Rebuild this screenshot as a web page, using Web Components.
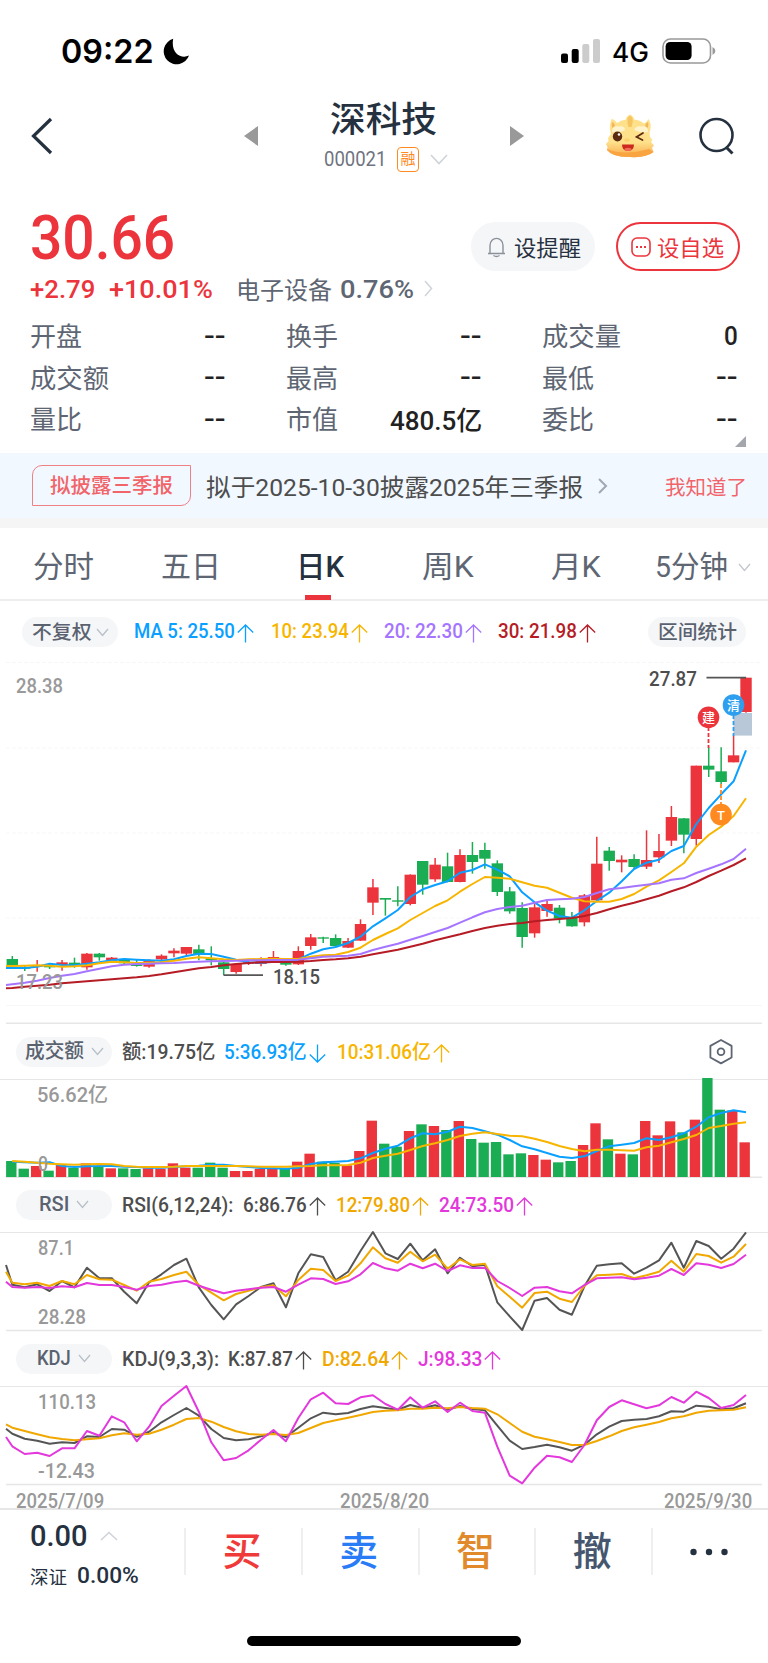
<!DOCTYPE html>
<html lang="zh-CN">
<head>
<meta charset="UTF-8">
<title>深科技 000021</title>
<style>
  body {
    margin: 0;
    background: #fff;
    color: #25313f;
    font-family: Roboto, "Noto Sans CJK SC", sans-serif;
  }
</style>
</head>
<body>
<status-bar></status-bar>
<stock-header></stock-header>
<quote-summary></quote-summary>
<quote-grid></quote-grid>
<notice-bar></notice-bar>
<period-tabs></period-tabs>

<indicator-row class="ma">
  <pill-button slot="pill" w="96" arrow><fit-text w="60">不复权</fit-text></pill-button>
  <trend-value w="101" color="#0aa0ff" style="margin-left:16px">MA 5: 25.50</trend-value>
  <trend-value w="78" color="#f7b500" style="margin-left:17px">10: 23.94</trend-value>
  <trend-value w="79" color="#a675ff" style="margin-left:16px">20: 22.30</trend-value>
  <trend-value w="79" color="#b51c25" style="margin-left:16px">30: 21.98</trend-value>
  <pill-button slot="end" w="98"><fit-text w="79">区间统计</fit-text></pill-button>
</indicator-row>
<candle-chart></candle-chart>

<indicator-row>
  <pill-button slot="pill" w="96" arrow><fit-text w="59">成交额</fit-text></pill-button>
  <fit-text w="93" style="margin-left:10px">额:19.75亿</fit-text>
  <trend-value w="83" color="#0aa0ff" dir="down" style="margin-left:9px">5:36.93亿</trend-value>
  <trend-value w="94" color="#f7b500" style="margin-left:11px">10:31.06亿</trend-value>
  <svg slot="end" width="26" height="28" viewBox="0 0 26 28" fill="none" stroke="#5e6673" stroke-width="1.8" style="margin-right:12px">
    <path d="M13 2 L23.600 7.900 V19.500 L13 25.400 L2.400 19.500 V7.900 Z" stroke-linejoin="round"/>
    <circle cx="13" cy="13.700" r="3.400"/>
  </svg>
</indicator-row>
<volume-chart></volume-chart>

<indicator-row>
  <pill-button slot="pill" w="96" arrow><fit-text w="30">RSI</fit-text></pill-button>
  <fit-text w="111" style="margin-left:10px">RSI(6,12,24):</fit-text>
  <trend-value w="64" style="margin-left:10px">6:86.76</trend-value>
  <trend-value w="74" color="#f0a800" style="margin-left:10px">12:79.80</trend-value>
  <trend-value w="75" color="#e338dc" style="margin-left:10px">24:73.50</trend-value>
</indicator-row>
<line-chart name="rsi" top="87.1" topw="36" bottom="28.28" bottomw="48"></line-chart>

<indicator-row>
  <pill-button slot="pill" w="96" arrow><fit-text w="34">KDJ</fit-text></pill-button>
  <fit-text w="97" style="margin-left:10px">KDJ(9,3,3):</fit-text>
  <trend-value w="65" style="margin-left:9px">K:87.87</trend-value>
  <trend-value w="67" color="#f0a800" style="margin-left:10px">D:82.64</trend-value>
  <trend-value w="64" color="#e338dc" style="margin-left:10px">J:98.33</trend-value>
</indicator-row>
<line-chart name="kdj" top="110.13" topw="58" bottom="-12.43" bottomw="57"></line-chart>

<date-axis></date-axis>
<trade-bar></trade-bar>

<script>
const RED = '#ec343c';
const GREEN = '#1aad53';

// small helper: every component only supplies its markup
class Base extends HTMLElement {
  connectedCallback() {
    this.attachShadow({ mode: 'open' });
    this.shadowRoot.innerHTML = this.render();
  }
}

// One line of text squeezed or stretched to a set width (w)
class FitText extends HTMLElement {
  connectedCallback() {
    const w = Number(this.getAttribute('w'));
    this.attachShadow({ mode: 'open' });
    this.shadowRoot.innerHTML = `
      <style>
        :host { display: block; flex: none; width: ${w}px; white-space: nowrap; }
        span { display: inline-block; transform-origin: 0 50%; }
      </style>
      <span><slot></slot></span>
    `;
    const span = this.shadowRoot.querySelector('span');
    const natural = span.offsetWidth;
    if (natural) span.style.transform = `scaleX(${w / natural})`;
  }
}

// Figure followed by a thin up or down arrow
class TrendValue extends Base {
  render() {
    const down = this.getAttribute('dir') === 'down';
    return `
      <style>
        :host { display: flex; flex: none; align-items: center; gap: 2px; color: ${this.getAttribute('color') || 'inherit'}; }
        svg { margin-top: 3px; ${down ? 'transform: rotate(180deg);' : ''} }
      </style>
      <fit-text w="${this.getAttribute('w')}"><slot></slot></fit-text>
      <svg width="17" height="19" viewBox="0 0 17 19" fill="none" stroke="currentColor" stroke-width="1.300"><path d="M8.500 1 V18.500 M.800 8.500 L8.500 1 L16.200 8.500"/></svg>
    `;
  }
}
customElements.define('trend-value', TrendValue);

class StatusBar extends Base {
  render() {
    return `
      <style>
        :host { display: flex; align-items: center; height: 102px; padding: 0 52px 0 61px; box-sizing: border-box; color: #000; font-family: Inter, sans-serif; }
        .time { font-size: 33px; font-weight: 600; line-height: 40px; }
        .net { font-size: 27px; font-weight: 500; margin: 2px 13px 0 12px; }
        .moon { margin-left: 9px; }
        .bars { margin-left: auto; }
      </style>
      <fit-text class="time" w="93">09:22</fit-text>
      <svg class="moon" width="27" height="27" viewBox="0 0 27 27"><path d="M10.2 .8 A13 13 0 1 0 26 17.6 C17.5 21.5 7.500 14.5 10.200 .8 Z"/></svg>
      <svg class="bars" width="40" height="26" viewBox="0 0 40 26">
        <rect x="1" y="15.500" width="7" height="9.500" rx="2"/>
        <rect x="11.700" y="11" width="7" height="14" rx="2"/>
        <rect x="22.300" y="6" width="7" height="19" rx="2" fill="#ccc"/>
        <rect x="33" y="1" width="7" height="24" rx="2" fill="#ccc"/>
      </svg>
      <fit-text class="net" w="37">4G</fit-text>
      <svg width="54" height="26" viewBox="0 0 54 26">
        <rect x="1" y="1" width="47.500" height="24" rx="7.500" fill="none" stroke="#999" stroke-width="1.600"/>
        <rect x="3.600" y="4" width="26" height="18" rx="4.500"/>
        <path d="M50.500 9 Q53.400 10.500 53.400 13 Q53.400 15.500 50.500 17 Z" fill="#999"/>
      </svg>
    `;
  }
}
customElements.define('status-bar', StatusBar);

class StockHeader extends Base {
  render() {
    return `
      <style>
        :host { display: flex; align-items: center; height: 68px; padding-left: 30px; box-sizing: border-box; }
        svg { flex: none; display: block; }
        .title { width: 228px; margin: 6px 12px 0 12px; height: 78px; display: flex; flex-direction: column; align-items: center; }
        h1 { margin: 0 2px 0 0; font-size: 35px; font-weight: 500; line-height: 41px; }
        .code { display: flex; align-items: center; height: 36px; margin-left: 4px; color: #6f7480; font-size: 20px; }
        .tag { width: 20px; height: 23px; margin: 0 11px; border: 1.5px solid #ff8a1f; border-radius: 4px; color: #ff8a1f; font-size: 15px; line-height: 22px; text-align: center; }
      </style>
      <svg width="24" height="40" viewBox="0 0 24 40" fill="none" stroke="#25313f" stroke-width="3.200"><path d="M21 3 L3.500 20 L21 37"/></svg>
      <svg width="14" height="20" viewBox="0 0 14 20" fill="#999" style="margin-left:190px"><path d="M14 0 V20 L0 10 Z"/></svg>
      <div class="title">
        <h1><fit-text w="107">深科技</fit-text></h1>
        <div class="code">
          <fit-text w="62">000021</fit-text>
          <span class="tag">融</span>
          <svg width="18" height="11" viewBox="0 0 18 11" fill="none" stroke="#d0d3d8" stroke-width="1.600"><path d="M1 1 L9 9.500 L17 1"/></svg>
        </div>
      </div>
      <svg width="14" height="20" viewBox="0 0 14 20" fill="#999"><path d="M0 0 V20 L14 10 Z"/></svg>
      <svg width="50" height="44" viewBox="0 0 50 44" style="margin-left:81px">
        <defs>
          <linearGradient id="g" x1="0" y1="0" x2="0" y2="1">
            <stop offset="0" stop-color="#ffe08a"/><stop offset=".65" stop-color="#ffe18c"/><stop offset="1" stop-color="#f8a848"/>
          </linearGradient>
        </defs>
        <path d="M6.500 5 Q9 5 12 9 Q16 6 21 5.500 Q21 2.500 25 .5 Q29 2.500 29 5.500 Q35 6 39 9.500 Q42 8 43.500 5 Q47.500 11 44.500 18 L45 23 L47.500 26 L46 28 L49 31.500 L47 34 L48.500 38 Q41 44 25 43 Q8 43.500 2 36 L2.500 33 L1 30 L3.500 27 L3 24 L6 20 Q3.500 13 6.500 5 Z" fill="url(#g)"/>
        <path d="M2 35 Q18 42 44 35 L48.500 38 Q41 44 25 43 Q8 43.500 2 36 Z" fill="#f8a440"/>
        <path d="M7 8 Q9.500 9 10 12 L7.500 14 Q6 11 7 8 Z M43 8 Q40.500 9 40 12 L42.500 14 Q44 11 43 8 Z" fill="#f3b45a"/>
        <path d="M22.500 4 Q25 0 27.500 4 Q28.500 8 26.500 13 H23.500 Q22 9 22.500 4 Z" fill="#f5c562"/>
        <path d="M7 18 Q7 11 14 12.500 Q20 11.500 20 16 Q15 19 7 18 Z" fill="#fff3cd"/>
        <path d="M29 16 Q31 11.500 36 12.500 Q43 11 43 18 Q35 19 29 16 Z" fill="#fff3cd"/>
        <ellipse cx="12.500" cy="22.500" rx="4.700" ry="5" fill="#5c2b12"/>
        <circle cx="14" cy="20.500" r="1.300" fill="#fff"/>
        <ellipse cx="22" cy="26" rx="3" ry="1.800" fill="#ffd071"/>
        <path d="M38 19 L31.500 23 L37.500 26" fill="none" stroke="#5c2b12" stroke-width="1.700" stroke-linecap="round"/>
        <path d="M17 30.500 H29 Q29 37 23 37 Q17 37 17 30.500 Z" fill="#cb291f"/>
        <ellipse cx="23" cy="35.300" rx="3.500" ry="1.600" fill="#f46a52"/>
      </svg>
      <svg width="38" height="40" viewBox="0 0 38 40" fill="none" stroke="#25313f" stroke-width="2.600" style="margin-left:43px"><circle cx="18.500" cy="19" r="16"/><path d="M28 31 L34.500 37.500" stroke-width="3"/></svg>
    `;
  }
}
customElements.define('stock-header', StockHeader);

class QuoteSummary extends Base {
  render() {
    return `
      <style>
        :host { display: flex; height: 144px; padding: 38px 28px 0 30px; box-sizing: border-box; }
        .price { color: ${RED}; font-size: 62px; font-weight: 500; line-height: 60px; }
        .sub { display: flex; align-items: center; height: 40px; font-size: 26.5px; color: #5e6673; }
        .up { color: ${RED}; font-weight: 500; }
        .btn { display: flex; align-items: center; box-sizing: border-box; width: 124px; height: 49px; margin-top: 14px; padding-bottom: 2px; border-radius: 25px; background: #f5f6f8; font-size: 22px; }
        .add { margin-left: 21px; background: #fff; border: 2px solid ${RED}; color: ${RED}; }
        svg { flex: none; }
      </style>
      <div>
        <fit-text class="price" w="145">30.66</fit-text>
        <div class="sub">
          <fit-text class="up" w="65">+2.79</fit-text>
          <fit-text class="up" w="104" style="margin-left:14px">+10.01%</fit-text>
          <fit-text w="96" style="margin-left:23px;font-size:24px">电子设备</fit-text>
          <fit-text w="74" style="margin-left:8px;font-weight:500">0.76%</fit-text>
          <svg width="9" height="17" viewBox="0 0 9 17" fill="none" stroke="#d0d3d8" stroke-width="1.500" style="margin-left:10px"><path d="M1 1 L7.500 8.500 L1 16"/></svg>
        </div>
      </div>
      <div class="btn" style="margin-left:auto">
        <svg width="19" height="21" viewBox="0 0 19 21" fill="none" stroke="#8b919b" stroke-width="1.400" style="margin:4px 8px 0 16px"><path d="M1 16.500 H18 M3 16 V8.500 C3 -1 16 -1 16 8.500 V16 M6.500 18.500 Q9.500 20.500 12.500 18.500"/></svg>
        <fit-text w="67">设提醒</fit-text>
      </div>
      <div class="btn add">
        <svg width="20" height="20" viewBox="0 0 20 20" fill="none" stroke="${RED}" stroke-width="1.600" style="margin:3px 6px 0 13px"><rect x="1" y="1" width="18" height="18" rx="5"/><path d="M5 10 h2 m2 0 h2 m2 0 h2" stroke-width="2"/></svg>
        <fit-text w="67">设自选</fit-text>
      </div>
    `;
  }
}
customElements.define('quote-summary', QuoteSummary);

class QuoteGrid extends Base {
  render() {
    const items = [
      ['开盘', '--', 22, 52], ['换手', '--', 22, 52], ['成交量', '0', 14, 79],
      ['成交额', '--', 22, 79], ['最高', '--', 22, 52], ['最低', '--', 22, 52],
      ['量比', '--', 22, 52], ['市值', '480.5亿', 92, 52], ['委比', '--', 22, 52]
    ];
    return `
      <style>
        :host { display: block; height: 139px; position: relative; }
        .grid { display: grid; grid-template-columns: 196px 196px 196px; column-gap: 60px; grid-auto-rows: 41.5px; padding-left: 30px; }
        .item { display: flex; align-items: center; justify-content: space-between; font-size: 26px; color: #5e6673; }
        .item b { font-weight: 500; color: #222; margin-top: 2px; }
        svg { position: absolute; right: 22px; bottom: 6px; }
      </style>
      <div class="grid">
        ${items.map(i => `<div class="item"><fit-text w="${i[3]}">${i[0]}</fit-text><b><fit-text w="${i[2]}">${i[1]}</fit-text></b></div>`).join('')}
      </div>
      <svg width="11" height="11" viewBox="0 0 11 11"><path d="M11 0 V11 H0 Z" fill="#a3a6ab"/></svg>
    `;
  }
}
customElements.define('quote-grid', QuoteGrid);

class NoticeBar extends Base {
  render() {
    return `
      <style>
        :host { display: flex; align-items: center; height: 75px; box-sizing: border-box; padding: 0 21px 0 32px; background: #f1f8ff; border-bottom: 10px solid #f5f5f5; }
        .tag { box-sizing: border-box; width: 159px; height: 41px; border: 1.5px solid #f08086; border-radius: 10px 0 10px 0; color: #f1646a; font-size: 20.5px; line-height: 41px; padding-left: 17px; font-weight: 500; }
        .text { margin-left: 15px; color: #4d4d4d; font-size: 24px; }
        .ok { margin: 1px 0 0 auto; color: #f1646a; font-size: 20px; }
      </style>
      <div class="tag"><fit-text w="123">拟披露三季报</fit-text></div>
      <fit-text class="text" w="377">拟于2025-10-30披露2025年三季报</fit-text>
      <svg width="10" height="16" viewBox="0 0 10 16" fill="none" stroke="#a0a8b3" stroke-width="2" style="margin-left:15px"><path d="M1 1 L8 8 L1 15"/></svg>
      <fit-text class="ok" w="82">我知道了</fit-text>
    `;
  }
}
customElements.define('notice-bar', NoticeBar);

class PeriodTabs extends Base {
  render() {
    const tabs = [['分时', 61, 33], ['五日', 60, 67], ['日K', 48, 75], ['周K', 52, 78], ['月K', 50, 77], ['5分钟', 73, 54]];
    return `
      <style>
        :host { display: flex; height: 73px; box-sizing: border-box; border-bottom: 2px solid #eee; font-size: 30px; color: #5e6673; }
        .tab { display: flex; flex-direction: column; align-items: center; justify-content: space-between; line-height: 77px; height: 72px; }
        .tab fit-text { height: 67px; }
        .on { color: #25313f; font-weight: 500; }
        .on::after { content: ''; width: 26px; height: 5px; margin-right: 4px; background: ${RED}; }
        svg { margin: 35px 0 0 10px; }
      </style>
      ${tabs.map(t => `<div class="tab${t[0] === '日K' ? ' on' : ''}" style="margin-left:${t[2]}px"><fit-text w="${t[1]}">${t[0]}</fit-text></div>`).join('')}
      <svg width="13" height="9" viewBox="0 0 13 9" fill="none" stroke="#c3c7cd" stroke-width="1.300"><path d="M1 1 L6.500 7.500 L12 1"/></svg>
    `;
  }
}
customElements.define('period-tabs', PeriodTabs);

class PillButton extends Base {
  render() {
    const arrow = this.hasAttribute('arrow');
    return `
      <style>
        :host { display: flex; flex: none; align-items: center; justify-content: center; gap: var(--pill-gap, 7px); box-sizing: border-box; width: ${this.getAttribute('w')}px; height: 30px; border-radius: 15px; background: #f5f6f8; color: #5a6270; line-height: 31px; }
      </style>
      <slot></slot>
      ${arrow ? '<svg width="13" height="9" viewBox="0 0 13 9" fill="none" stroke="#b9bfc8" stroke-width="1.300"><path d="M1 1 L6.500 7.500 L12 1"/></svg>' : ''}
    `;
  }
}
customElements.define('pill-button', PillButton);

class IndicatorRow extends Base {
  render() {
    return `
      <style>
        :host { display: flex; align-items: center; box-sizing: border-box; height: 56px; padding: 0 22px 0 16px; border-bottom: 1.500px solid #e6e6e6; font-size: 20px; font-weight: 500; color: #4d4d4d; line-height: 30px; }
        :host(.ma) { height: 49px; padding: 13px 22px 0 22px; border: none; font-size: 19.5px; --pill-gap: 4px; }
        .end { margin-left: auto; display: flex; }
      </style>
      <slot name="pill"></slot>
      <slot></slot>
      <div class="end"><slot name="end"></slot></div>
    `;
  }
}
customElements.define('indicator-row', IndicatorRow);

// ---- charts ----
// Series are sampled at 3 units per pixel, one value per trading day.
const STEP = 12.436;
const dayX = i => 12.3 + i * STEP;

function line(values, color, top, start) {
  const pts = values.map((v, i) => `${dayX(i).toFixed(1)},${(top + v / 3).toFixed(1)}`);
  if (start) pts.unshift(`6,${(top + start / 3).toFixed(1)}`);
  return `<polyline points="${pts.join(' ')}" fill="none" stroke="${color}" stroke-width="2" stroke-linejoin="round"/>`;
}

function label(x, y, w, text, color = '#999') {
  return `<text x="${x}" y="${y}" textLength="${w}" lengthAdjust="spacingAndGlyphs" fill="${color}">${text}</text>`;
}

const CHART_CSS = `
  :host { display: block; }
  svg { display: block; overflow: visible; font-size: 20px; font-weight: 500; }
`;

// colour, high, body top, body bottom, low
const CANDLES = `g918,927,945,948 g948,951,956,963 r930,946,950,965 g940,948,952,957 r930,937,945,962 g923,938,945,953
r909,911,952,959 g909,911,922,932 r921,923,932,937 g926,930,940,943 g930,942,948,950 r928,930,950,953
r913,917,928,938 r895,902,910,922 r891,891,911,918 g884,898,915,931 g889,925,931,946 g930,937,957,975
r940,942,966,971 r930,937,941,945 r922,930,942,949 r903,921,930,935 g928,934,944,947 r889,903,943,945
r852,862,888,899 g860,862,866,879 g853,864,888,890 r864,873,893,894 r808,822,872,873 r687,712,758,795
g744,744,749,797 g709,751,755,769 r673,674,762,766 g633,633,704,734 r624,644,688,695 g608,649,696,697
r598,615,696,697 g576,615,636,671 g578,600,626,656 g631,640,726,738 g711,724,784,791 g757,774,861,893
r762,772,850,863 r752,762,783,800 g765,773,806,820 g786,804,829,830 r732,736,817,829 r560,641,751,752
g591,602,633,662 r616,629,637,667 g613,627,651,657 r541,630,650,657 r552,603,622,639 r468,501,572,588
g504,505,554,610 r347,347,567,587 g292,347,359,381 g292,364,396,402 r256,316,337,337 r83,83,186,188`.split(/\s+/);

const MA5 = [953,954,950,941,945,946,941,937,931,927,929,931,932,928,918,911,912,920,929,937,938,935,936,928,911,898,891,879,860,829,805,780,741,718,705,694,668,660,643,659,679,727,757,782,798,803,781,753,728,694,657,638,629,603,588,522,474,433,394,301];
const MA10 = [948,947,946,947,950,949,946,940,935,937,939,938,937,932,926,922,925,928,930,928,927,926,927,927,920,916,914,906,893,870,852,835,810,789,768,751,725,702,681,683,686,697,707,713,728,743,754,755,755,747,732,710,691,666,640,590,555,530,498,445];
const MA20 = [1003,998,992,984,977,972,964,956,949,944,942,941,940,939,937,935,934,933,932,931,931,930,930,929,925,920,919,917,912,900,890,881,869,858,846,834,818,802,787,777,771,767,758,750,748,746,741,729,718,714,709,704,700,689,685,669,656,643,627,596];
const MA30 = [1014,1010,1007,1004,1000,997,994,991,988,985,982,978,973,967,961,955,951,946,942,939,937,936,936,935,933,930,928,925,920,913,906,899,890,881,871,862,853,843,834,827,822,819,814,810,807,804,798,789,778,767,758,748,737,724,712,696,678,662,645,625];

class CandleChart extends Base {
  marker(x, y, color, text, from, to) {
    return `
      <path d="M${x} ${from} V${to}" stroke="${color}" stroke-width="1.8" stroke-dasharray="4 2"/>
      <circle cx="${x}" cy="${y}" r="10.8" fill="${color}"/>
      <text x="${x}" y="${y + 5}" font-size="13" text-anchor="middle" fill="#fff">${text}</text>`;
  }

  render() {
    const candles = CANDLES.map((c, i) => {
      const color = c[0] === 'r' ? RED : GREEN;
      const [high, top, bottom, low] = c.slice(1).split(',').map(v => 650 + v / 3);
      const x = dayX(i);
      return `<path d="M${x} ${high} V${low}" stroke="${color}" stroke-width="1.5"/><rect x="${x - 5.7}" y="${top}" width="11.4" height="${Math.max(bottom - top, 1.2)}" fill="${color}"/>`;
    }).join('');
    return `
      <style>${CHART_CSS}</style>
      <svg width="768" height="374" viewBox="0 650 768 374">
        <path d="M6 662.500 H762 M6 748 H762 M6 833 H762 M6 918 H762" stroke="#f7f7f7" stroke-width="1.2" stroke-dasharray="4 2"/>
        <path d="M6 1005.500 H762" stroke="#f7f7f7" stroke-width="1.2"/>
        <path d="M6 1023.300 H762" stroke="#e6e6e6" stroke-width="1.5"/>
        <rect x="733.500" y="713" width="18.500" height="22.600" fill="#b9c8d8"/>
        ${candles}
        ${line(MA5, '#0aa0ff', 650, 954)}
        ${line(MA10, '#f7b500', 650, 948)}
        ${line(MA20, '#a675ff', 650, 1005)}
        ${line(MA30, '#b51c25', 650, 1015)}
        <path d="M223.500 975.200 H263 M706.500 677.700 H746" stroke="#555" stroke-width="1.8"/>
        ${label(16, 692.6, 47, '28.38')}
        ${label(16, 989, 47, '17.23')}
        ${label(273, 984, 47, '18.15', '#4d4d4d')}
        ${label(649, 686, 48, '27.87', '#4d4d4d')}
        ${this.marker(708.5, 717.3, '#ec343c', '建', 727, 748)}
        ${this.marker(733.5, 705, '#2d9fee', '清', 715, 736)}
        ${this.marker(721, 814.6, '#ff8a1f', 'T', 784, 804)}
      </svg>
    `;
  }
}
customElements.define('candle-chart', CandleChart);

const VOLUMES = 'g423 g446 r438 g452 r435 g443 r430 g440 r445 g445 g447 r445 r446 r430 r443 g443 g428 g443 r453 r453 r447 r447 g447 r425 r401 g425 g429 r436 r393 r302 g371 g380 r333 g313 r318 g330 r303 g357 g368 g366 g403 g400 r405 r419 g427 g423 r375 r310 g358 r401 g403 r303 r346 r304 g337 r299 g174 g269 r272 r367'.split(' ');
const VOL5 = [425,427,428,427,438,441,439,438,438,440,441,443,443,441,439,437,434,434,438,441,444,445,446,443,432,427,425,423,415,399,386,377,355,340,343,335,320,324,334,344,360,379,388,399,410,414,409,393,379,374,369,355,360,352,340,320,292,279,271,277];
const VOL10 = [423,425,428,431,433,434,433,432,433,438,440,441,441,440,438,438,438,438,438,439,440,440,440,439,438,436,436,435,428,414,407,401,390,378,370,360,348,341,337,342,347,349,356,366,378,387,394,389,389,391,392,382,377,367,357,345,324,318,311,307];

class VolumeChart extends Base {
  render() {
    const bars = VOLUMES.map((v, i) => {
      const top = 1020 + v.slice(1) / 3;
      const x = Math.max(6, 11.3 + i * 12.43 - 5.2);
      return `<rect x="${x}" y="${top}" width="10.4" height="${1177 - top}" fill="${v[0] === 'r' ? RED : GREEN}"/>`;
    }).join('');
    return `
      <style>${CHART_CSS}</style>
      <svg width="768" height="97" viewBox="0 1080 768 97">
        <path d="M6 1177.200 H762" stroke="#e6e6e6" stroke-width="1.5"/>
        ${bars}
        ${line(VOL5, '#0aa0ff', 1020)}
        ${line(VOL10, '#f7b500', 1020)}
        ${label(37, 1102, 71, '56.62亿')}
        ${label(38, 1171, 10, '0')}
      </svg>
    `;
  }
}
customElements.define('volume-chart', VolumeChart);

const SERIES = {
  rsi: [
    { color: '#555', start: 120, v: [179,187,178,198,168,187,128,160,160,200,235,172,148,120,101,187,240,283,238,213,186,175,247,145,88,96,166,140,78,21,85,102,56,106,73,145,98,124,119,232,274,315,227,219,254,269,184,122,118,115,146,128,106,53,128,48,63,101,71,22] },
    { color: '#f0a800', start: 140, v: [173,178,173,183,168,178,150,163,164,180,197,170,162,150,140,180,203,226,207,197,187,181,214,165,131,135,168,152,115,67,100,113,80,109,89,131,103,120,116,184,215,248,204,200,221,231,183,151,149,147,160,151,140,107,140,87,93,113,95,57] },
    { color: '#e338dc', start: 170, v: [186,188,186,189,184,187,174,180,180,186,194,183,179,172,167,182,194,205,197,193,188,186,200,179,160,162,177,169,148,114,130,137,116,130,116,138,121,129,128,168,189,213,188,186,199,205,180,160,158,157,163,158,152,132,150,115,119,129,117,89] }
  ],
  kdj: [
    { color: '#555', start: 611, v: [626,641,647,656,652,654,634,636,612,614,635,620,592,570,549,572,612,639,646,643,634,624,636,608,580,563,568,564,552,544,549,554,540,549,541,554,543,552,556,602,647,672,666,659,667,677,659,628,605,588,584,582,574,559,560,542,545,553,550,535] },
    { color: '#f0a800', start: 598, v: [608,618,628,637,642,646,643,640,631,625,629,626,614,599,582,579,590,606,619,627,629,627,630,624,609,594,586,578,570,561,557,556,551,551,548,550,546,549,551,568,594,620,635,643,651,660,660,648,634,618,607,599,591,580,574,563,557,556,554,547] },
    { color: '#e338dc', start: 636, v: [664,687,683,693,670,670,618,632,574,592,649,605,543,512,483,560,652,706,699,676,644,615,649,579,523,503,535,537,517,511,537,554,517,548,529,561,533,558,563,665,752,775,728,692,697,711,660,586,546,526,538,550,541,516,533,500,519,549,540,510] }
  ]
};

class LineChart extends Base {
  render() {
    const name = this.getAttribute('name');
    const y = name === 'rsi' ? 1233 : 1387;
    return `
      <style>${CHART_CSS}</style>
      <svg width="768" height="98" viewBox="0 ${y} 768 98">
        <path d="M6 ${y + 97.6} H762" stroke="#e6e6e6" stroke-width="1.5"/>
        ${label(38, y + 22, this.getAttribute('topw'), this.getAttribute('top'))}
        ${label(38, y + 91, this.getAttribute('bottomw'), this.getAttribute('bottom'))}
        ${SERIES[name].map(s => line(s.v, s.color, 1225, s.start)).join('')}
      </svg>
    `;
  }
}
customElements.define('line-chart', LineChart);

class DateAxis extends Base {
  render() {
    return `
      <style>
        :host { display: flex; justify-content: space-between; align-items: flex-end; height: 25px; box-sizing: border-box; padding: 0 16px; border-bottom: 2px solid #e6e6e6; color: #999; font-size: 20px; font-weight: 500; line-height: 13px; }
      </style>
      <fit-text w="88">2025/7/09</fit-text>
      <fit-text w="89">2025/8/20</fit-text>
      <fit-text w="88">2025/9/30</fit-text>
    `;
  }
}
customElements.define('date-axis', DateAxis);

class TradeBar extends Base {
  render() {
    const actions = [['买', '#f03a3a'], ['卖', '#2a7bf6'], ['智', '#e08a2c'], ['撤', '#46566f']];
    return `
      <style>
        :host { display: block; height: 153px; }
        .bar { display: flex; height: 81px; }
        .index { width: 184px; padding: 8px 0 0 30px; box-sizing: border-box; font-weight: 500; }
        .row { display: flex; align-items: center; }
        .act { flex: 1; display: flex; align-items: center; justify-content: center; height: 47px; margin-top: 18px; padding-right: 3px; border-left: 2px solid #efefef; font-size: 39px; font-weight: 500; line-height: 50px; box-sizing: border-box; }
        .home { width: 274px; height: 10px; margin: 45px 0 0 247px; border-radius: 5px; background: #000; }
      </style>
      <div class="bar">
        <div class="index">
          <div class="row" style="height:35px;font-size:30px"><fit-text w="58">0.00</fit-text>
            <svg width="18" height="10" viewBox="0 0 18 10" fill="none" stroke="#d0d3d8" stroke-width="1.600" style="margin-left:12px"><path d="M1 9 L9 1.500 L17 9"/></svg></div>
          <div class="row" style="height:45px;font-size:22px"><fit-text w="37" style="font-size:18px;font-weight:400">深证</fit-text><fit-text w="62" style="margin-left:10px">0.00%</fit-text></div>
        </div>
        ${actions.map(a => `<div class="act" style="color:${a[1]}">${a[0]}</div>`).join('')}
        <div class="act"><svg width="40" height="8" viewBox="0 0 40 8" fill="#25313f"><circle cx="4.500" cy="4" r="3.200"/><circle cx="20" cy="4" r="3.200"/><circle cx="35.500" cy="4" r="3.200"/></svg></div>
      </div>
      <div class="home"></div>
    `;
  }
}
customElements.define('trade-bar', TradeBar);

// last, so the text is measured with its final styles
customElements.define('fit-text', FitText);
</script>
</body>
</html>
